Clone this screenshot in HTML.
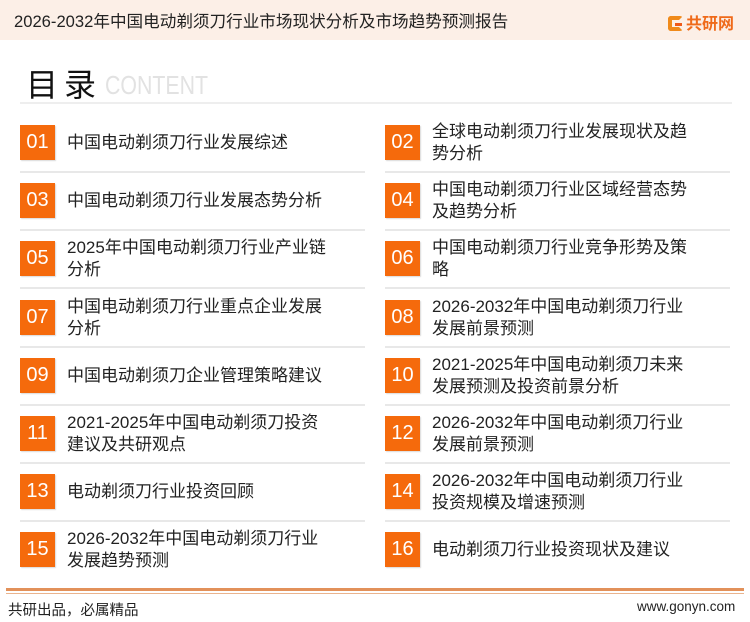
<!DOCTYPE html>
<html><head><meta charset="utf-8"><style>
*{margin:0;padding:0;box-sizing:border-box}
body{width:750px;height:622px;background:#fff;font-family:"Liberation Sans","Noto Sans CJK SC",sans-serif;position:relative;overflow:hidden;color:#222}
.hd{position:absolute;left:0;top:0;width:750px;height:40px;background:#fcefe7}
.hd .t{position:absolute;left:14px;top:8px;font-size:16.6px;color:#222}
.logo{position:absolute;left:668px;top:10px;font-size:16px;font-weight:bold;color:#ef6a1a}
.logo i{display:inline-block;width:15px;height:15px;border:4px solid #f08a1a;border-right-color:transparent;border-radius:3px;vertical-align:-2px;margin-right:3px;position:relative}
.logo i:after{content:"";position:absolute;left:3px;top:3px;width:7px;height:3px;background:#ef5a1a}
.tt{position:absolute;left:26px;top:60px;font-size:32px;color:#111;letter-spacing:6px}
.ct{position:absolute;left:105px;top:70px;font-size:26px;color:#e2e2e2;transform:scaleX(.82);transform-origin:left}
.hl{position:absolute;left:20px;top:102px;width:712px;height:2px;background:#eee}
.it{position:absolute;width:345px}
.it b{position:absolute;left:0;width:35px;height:35px;background:#f56a0c;color:#fff;font-weight:normal;font-size:20px;text-align:center;line-height:35px;box-shadow:1px 1px 1px rgba(0,0,0,.15)}
.it span{position:absolute;left:47px;font-size:17px;line-height:22px;color:#222;width:300px}
.it s{position:absolute;left:0;width:345px;height:2px;background:#e8e8e8;text-decoration:none}
.fl{position:absolute;left:6px;width:738px;background:#e2915a}
.ft{position:absolute;top:599px;font-size:14.5px;color:#222}
</style></head><body>
<div class="hd"><div class="t">2026-2032年中国电动剃须刀行业市场现状分析及市场趋势预测报告</div><div class="logo"><i></i>共研网</div></div>
<div class="tt">目录</div><div class="ct">CONTENT</div>
<div class="hl"></div>
<div id="c"></div>
<div class="fl" style="top:588px;height:3px"></div>
<div class="fl" style="top:593px;height:1px;background:#eab48e"></div>
<div class="ft" style="left:8px">共研出品，必属精品</div>
<div class="ft" style="left:637px;font-size:13.5px">www.gonyn.com</div>
<script>
var d=[["01","中国电动剃须刀行业发展综述"],["02","全球电动剃须刀行业发展现状及趋<br>势分析"],["03","中国电动剃须刀行业发展态势分析"],["04","中国电动剃须刀行业区域经营态势<br>及趋势分析"],["05","2025年中国电动剃须刀行业产业链<br>分析"],["06","中国电动剃须刀行业竞争形势及策<br>略"],["07","中国电动剃须刀行业重点企业发展<br>分析"],["08","2026-2032年中国电动剃须刀行业<br>发展前景预测"],["09","中国电动剃须刀企业管理策略建议"],["10","2021-2025年中国电动剃须刀未来<br>发展预测及投资前景分析"],["11","2021-2025年中国电动剃须刀投资<br>建议及共研观点"],["12","2026-2032年中国电动剃须刀行业<br>发展前景预测"],["13","电动剃须刀行业投资回顾"],["14","2026-2032年中国电动剃须刀行业<br>投资规模及增速预测"],["15","2026-2032年中国电动剃须刀行业<br>发展趋势预测"],["16","电动剃须刀行业投资现状及建议"]];
var h="";
for(var i=0;i<16;i++){var r=Math.floor(i/2),x=i%2?385:20,y=125+r*58.2;var two=d[i][1].indexOf("<br>")>=0;
h+='<div class="it" style="left:'+x+'px;top:'+y+'px"><b>'+d[i][0]+'</b><span style="top:'+(two?-4:7)+'px">'+d[i][1]+'</span>'+(r<7?'<s style="top:46px"></s>':'')+'</div>';}
document.getElementById("c").innerHTML=h;
</script>
</body></html>
